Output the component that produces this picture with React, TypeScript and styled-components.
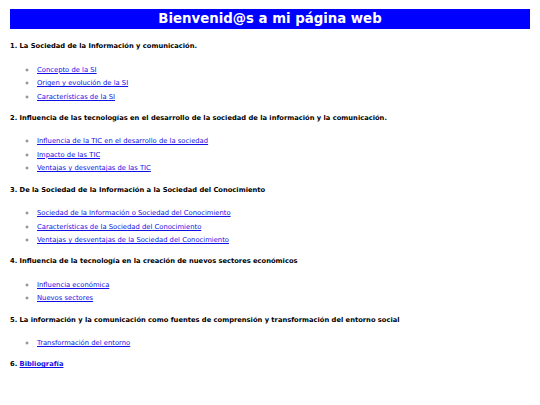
import * as React from 'react';
import styled, { createGlobalStyle } from 'styled-components';

const GlobalStyle = createGlobalStyle`
  body {
    margin: 0;
    background: #ffffff;
    font-family: "DejaVu Sans", Verdana, sans-serif;
  }
`;

const Page = styled.div`
  padding: 9px 10px 0 10px;
`;

const Banner = styled.h1`
  margin: 0;
  height: 20px;
  line-height: 20px;
  background: #0000ff;
  color: #ffffff;
  text-align: center;
  font-size: 13.3px;
  font-weight: bold;
`;

const Sections = styled.div`
  padding-top: 10px;
`;

const Heading = styled.p`
  margin: 0;
  font-size: 6.73px;
  line-height: 14px;
  font-weight: bold;
  color: #000000;
`;

const SubList = styled.ul`
  list-style: circle;
  margin: 10.5px 0 6.8px 0;
  padding-left: 27px;
`;

const Item = styled.li`
  font-size: 6.8px;
  line-height: 13.5px;
  color: #777777;
`;

const Link = styled.a`
  color: #1010e6;
  text-decoration: underline;
`;

type Section = {
  title: string;
  links: string[];
};

const sections: Section[] = [
  {
    title: '1. La Sociedad de la Información y comunicación.',
    links: ['Concepto de la SI', 'Origen y evolución de la SI', 'Características de la SI'],
  },
  {
    title: '2. Influencia de las tecnologías en el desarrollo de la sociedad de la información y la comunicación.',
    links: [
      'Influencia de la TIC en el desarrollo de la sociedad',
      'Impacto de las TIC',
      'Ventajas y desventajas de las TIC',
    ],
  },
  {
    title: '3. De la Sociedad de la Información a la Sociedad del Conocimiento',
    links: [
      'Sociedad de la Información o Sociedad del Conocimiento',
      'Características de la Sociedad del Conocimiento',
      'Ventajas y desventajas de la Sociedad del Conocimiento',
    ],
  },
  {
    title: '4. Influencia de la tecnología en la creación de nuevos sectores económicos',
    links: ['Influencia económica', 'Nuevos sectores'],
  },
  {
    title: '5. La información y la comunicación como fuentes de comprensión y transformación del entorno social',
    links: ['Transformación del entorno'],
  },
];

const App: React.FC = () => (
  <Page>
    <GlobalStyle />
    <Banner>Bienvenid@s a mi página web</Banner>
    <Sections>
      {sections.map(section => (
        <React.Fragment key={section.title}>
          <Heading>{section.title}</Heading>
          <SubList>
            {section.links.map(link => (
              <Item key={link}>
                <Link href="#">{link}</Link>
              </Item>
            ))}
          </SubList>
        </React.Fragment>
      ))}
      <Heading>
        6. <Link href="#">Bibliografía</Link>
      </Heading>
    </Sections>
  </Page>
);

export default App;
